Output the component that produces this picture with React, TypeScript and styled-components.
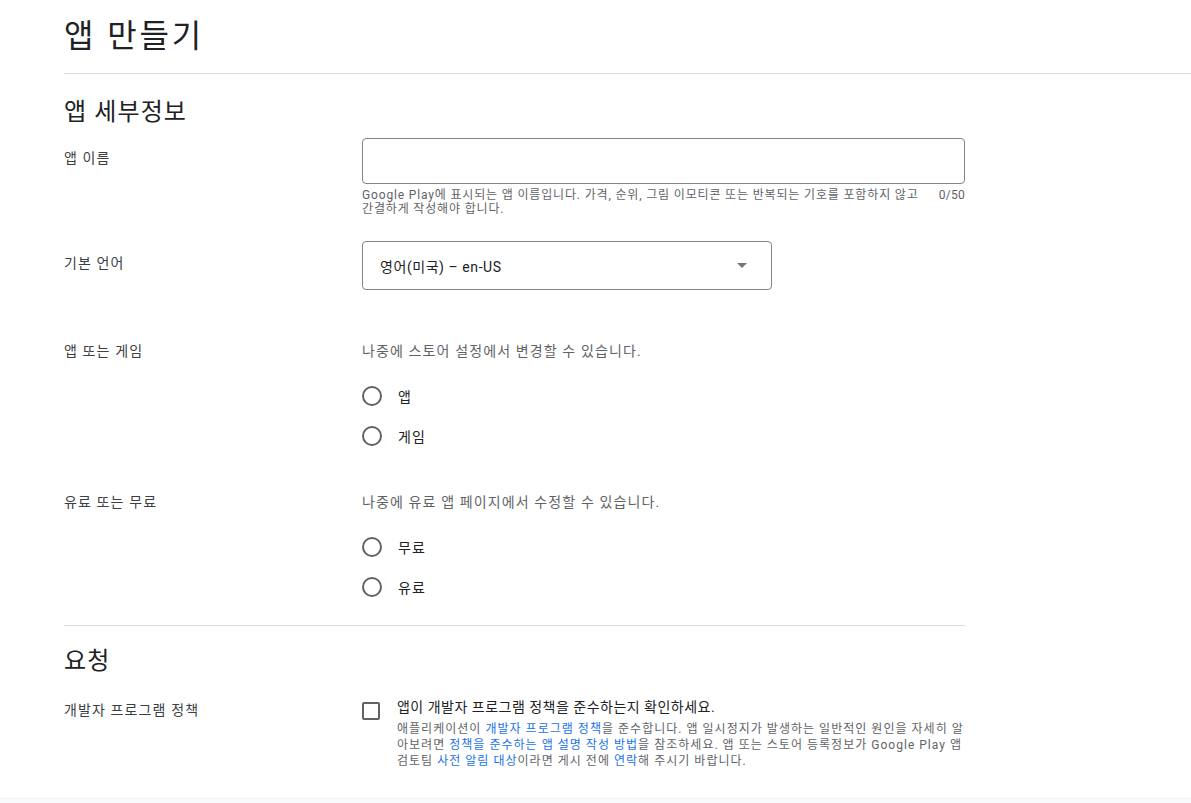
import React from "react";
import styled, { createGlobalStyle } from "styled-components";

const GlobalStyle = createGlobalStyle`
  html, body { margin: 0; padding: 0; background: #ffffff; }
  body {
    font-family: Roboto, "Noto Sans CJK KR", "Noto Sans", sans-serif;
    color: #202124;
    letter-spacing: 0.07em;
  }
  * { box-sizing: border-box; }
`;

const Page = styled.div`
  padding-left: 64px;
  padding-top: 16px;
`;

const Title = styled.h1`
  margin: 0;
  font-size: 32px;
  line-height: 40px;
  font-weight: 400;
  color: #202124;
  letter-spacing: 0.09em;
`;

const HeaderRule = styled.div`
  margin-top: 17px;
  border-top: 1px solid #dadce0;
`;

const Form = styled.div`
  width: 901px;
`;

const SectionTitle = styled.h2<{ $top: number }>`
  margin: ${(p) => p.$top}px 0 0;
  font-size: 24px;
  line-height: 32px;
  font-weight: 400;
  color: #202124;
`;

const Row = styled.div<{ $top: number }>`
  display: grid;
  grid-template-columns: 298px 603px;
  margin-top: ${(p) => p.$top}px;
`;

const Label = styled.div<{ $pad: number }>`
  padding-top: ${(p) => p.$pad}px;
  font-size: 14px;
  line-height: 20px;
  color: #3c4043;
`;

const Control = styled.div`
  display: flex;
  flex-direction: column;
`;

const TextBox = styled.div`
  height: 46px;
  border: 1px solid #80868b;
  border-radius: 4px;
`;

const HelperRow = styled.div`
  display: flex;
  justify-content: space-between;
  margin-top: 4px;
  font-size: 12px;
  line-height: 14px;
  color: #5f6368;
  letter-spacing: 0.07em;
`;

const HelperText = styled.div`
  flex: 1;
  padding-right: 8px;
  white-space: nowrap;
`;

const Counter = styled.div`
  flex: none;
  letter-spacing: 0.02em;
`;

const Select = styled.div`
  width: 410px;
  height: 49px;
  border: 1px solid #80868b;
  border-radius: 4px;
  display: flex;
  align-items: center;
  justify-content: space-between;
  padding: 0 24px 0 17px;
  font-size: 14px;
  color: #202124;
  letter-spacing: 0.04em;
`;

const Caret = styled.span`
  width: 0;
  height: 0;
  border-left: 5px solid transparent;
  border-right: 5px solid transparent;
  border-top: 5px solid #757575;
`;

const Description = styled.div`
  font-size: 14px;
  line-height: 20px;
  color: #5f6368;
`;

const RadioGroup = styled.div`
  margin-top: 15px;
  display: flex;
  flex-direction: column;
`;

const RadioRow = styled.label`
  display: flex;
  align-items: center;
  height: 40px;
  font-size: 14px;
  color: #202124;
`;

const RadioCircle = styled.span`
  width: 20px;
  height: 20px;
  border: 2px solid #5f6368;
  border-radius: 50%;
  margin-right: 16px;
  flex: none;
`;

const Rule = styled.div`
  margin-top: 18px;
  border-top: 1px solid #dadce0;
`;

const CheckRow = styled.div`
  display: flex;
  align-items: flex-start;
`;

const CheckBox = styled.span`
  width: 18px;
  height: 18px;
  margin-top: 5px;
  border: 2px solid #5f6368;
  border-radius: 2px;
  flex: none;
  margin-right: 17px;
`;

const CheckBody = styled.div`
  display: flex;
  flex-direction: column;
`;

const CheckMain = styled.div`
  font-size: 14px;
  line-height: 20px;
  color: #202124;
  letter-spacing: 0.035em;
`;

const CheckDesc = styled.div`
  margin-top: 4px;
  font-size: 12px;
  line-height: 16px;
  color: #5f6368;
  letter-spacing: 0.085em;
  white-space: nowrap;
`;

const Link = styled.a`
  color: #1a73e8;
  text-decoration: none;
`;

const Footer = styled.div`
  margin-top: 29px;
  height: 8px;
  background: #f8f9fa;
  border-top: 1px solid #f1f3f4;
`;

const Radio: React.FC<{ label: string }> = ({ label }) => (
  <RadioRow>
    <RadioCircle />
    {label}
  </RadioRow>
);

export default function App() {
  return (
    <>
      <GlobalStyle />
      <Page>
        <Title>앱 만들기</Title>
        <HeaderRule />
        <Form>
          <SectionTitle $top={22}>앱 세부정보</SectionTitle>

          <Row $top={10}>
            <Label $pad={10}>앱 이름</Label>
            <Control>
              <TextBox />
              <HelperRow>
                <HelperText>
                  Google Play에 표시되는 앱 이름입니다. 가격, 순위, 그림 이모티콘 또는 반복되는 기호를 포함하지 않고
                  <br />
                  간결하게 작성해야 합니다.
                </HelperText>
                <Counter>0/50</Counter>
              </HelperRow>
            </Control>
          </Row>

          <Row $top={25}>
            <Label $pad={12}>기본 언어</Label>
            <Control>
              <Select>
                <span>영어(미국) – en-US</span>
                <Caret />
              </Select>
            </Control>
          </Row>

          <Row $top={51}>
            <Label $pad={0}>앱 또는 게임</Label>
            <Control>
              <Description>나중에 스토어 설정에서 변경할 수 있습니다.</Description>
              <RadioGroup>
                <Radio label="앱" />
                <Radio label="게임" />
              </RadioGroup>
            </Control>
          </Row>

          <Row $top={36}>
            <Label $pad={0}>유료 또는 무료</Label>
            <Control>
              <Description>나중에 유료 앱 페이지에서 수정할 수 있습니다.</Description>
              <RadioGroup>
                <Radio label="무료" />
                <Radio label="유료" />
              </RadioGroup>
            </Control>
          </Row>

          <Rule />

          <SectionTitle $top={19}>요청</SectionTitle>

          <Row $top={20}>
            <Label $pad={3}>개발자 프로그램 정책</Label>
            <CheckRow>
              <CheckBox />
              <CheckBody>
                <CheckMain>앱이 개발자 프로그램 정책을 준수하는지 확인하세요.</CheckMain>
                <CheckDesc>
                  애플리케이션이 <Link>개발자 프로그램 정책</Link>을 준수합니다. 앱 일시정지가 발생하는 일반적인 원인을 자세히 알
                  <br />
                  아보려면 <Link>정책을 준수하는 앱 설명 작성 방법</Link>을 참조하세요. 앱 또는 스토어 등록정보가 Google Play 앱
                  <br />
                  검토팀 <Link>사전 알림 대상</Link>이라면 게시 전에 <Link>연락</Link>해 주시기 바랍니다.
                </CheckDesc>
              </CheckBody>
            </CheckRow>
          </Row>
        </Form>
      </Page>
      <Footer />
    </>
  );
}
